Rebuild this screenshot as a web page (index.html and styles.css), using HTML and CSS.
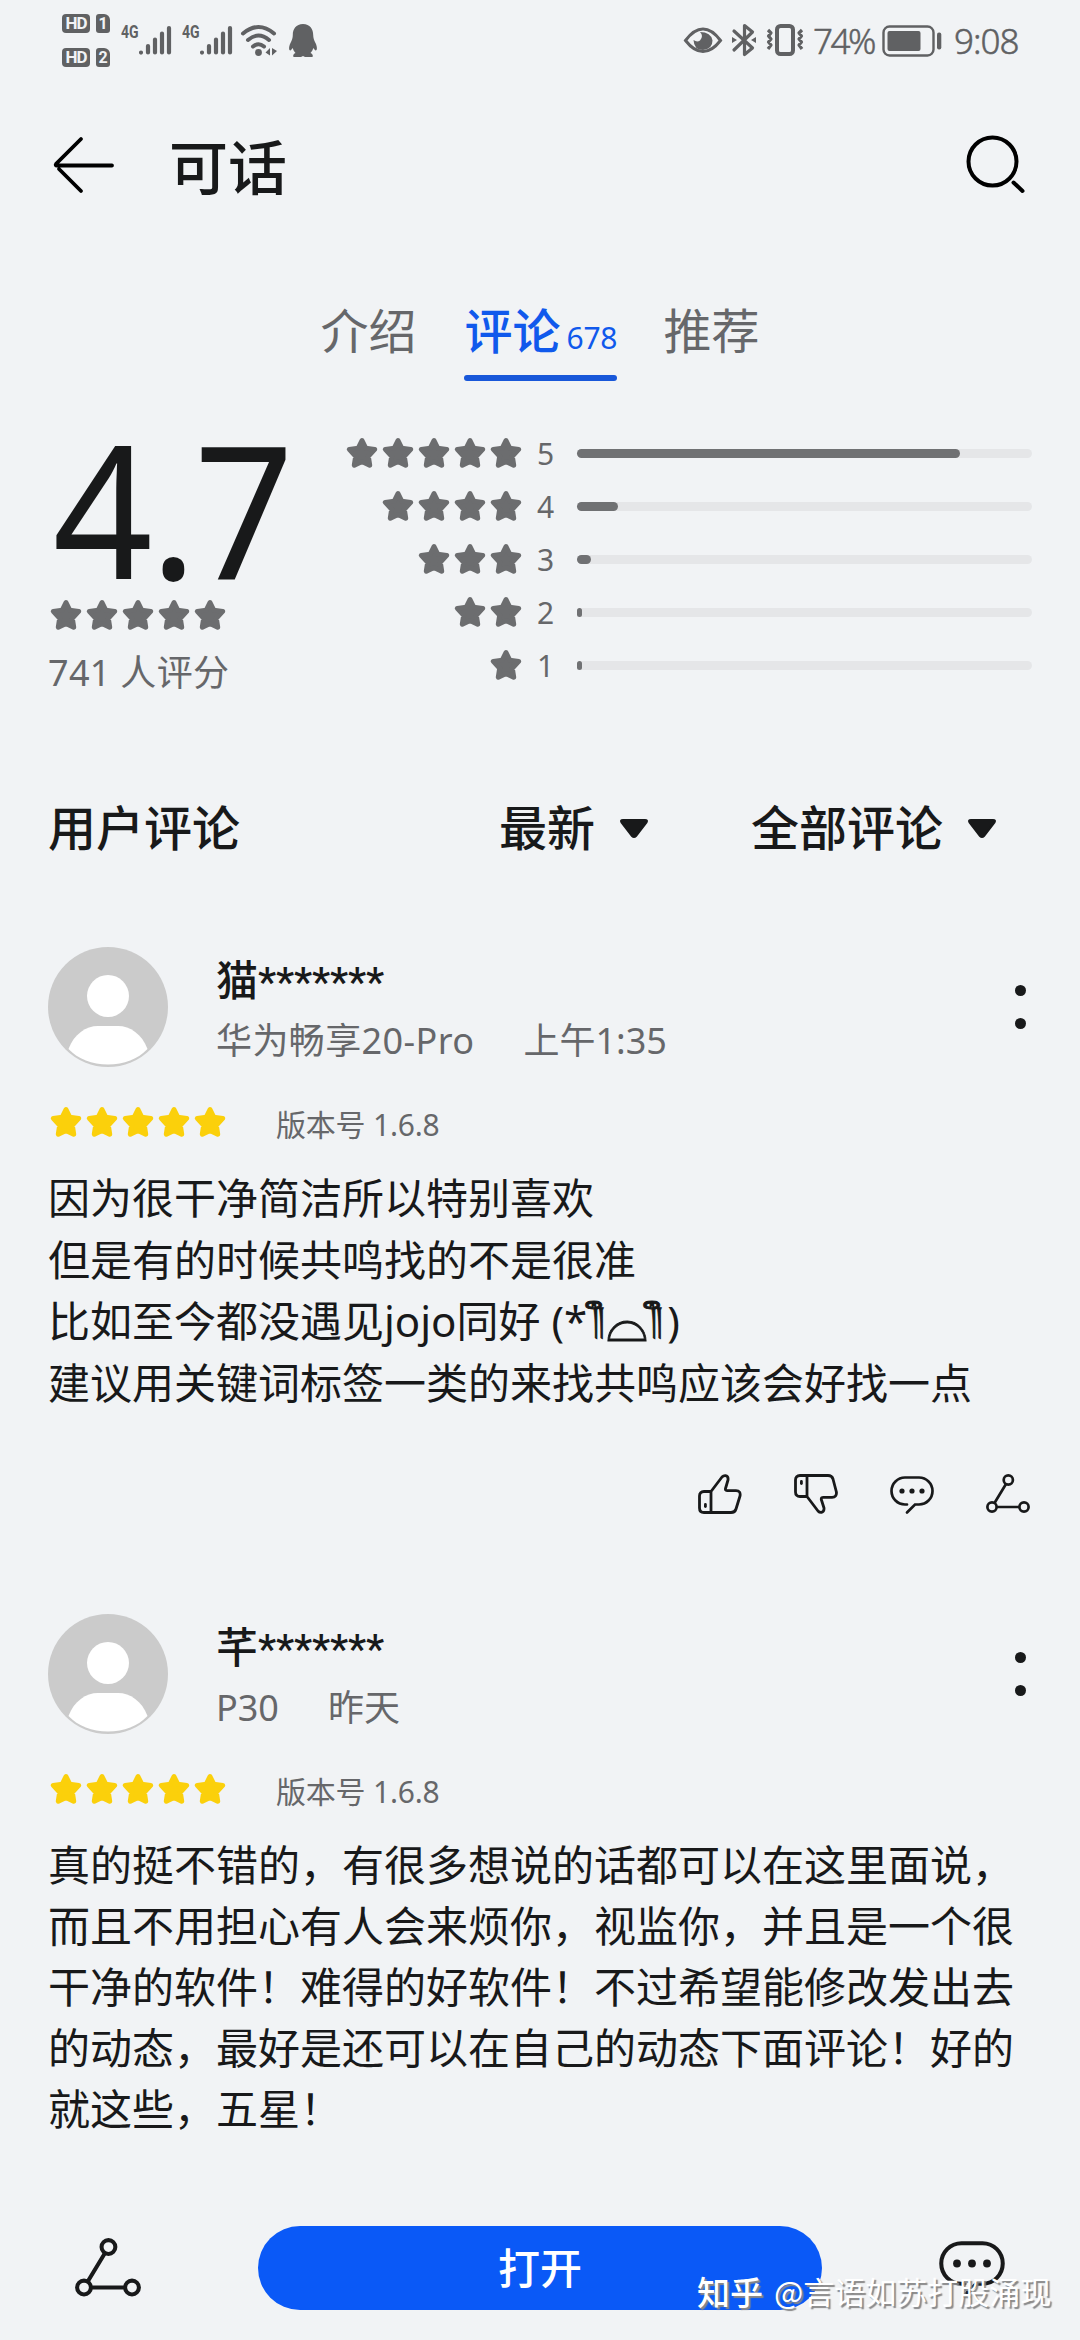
FILE: index.html
```html
<!DOCTYPE html>
<html lang="zh-CN">
<head>
<meta charset="utf-8">
<title>可话</title>
<link rel="stylesheet" href="styles.css">
</head>
<body>
<svg class="defs" width="0" height="0">
  <symbol id="star" viewBox="0 0 36 36"><path d="M18 5.500 L21.700 13.100 L30.700 14.400 L24.300 21.200 L25.700 30.200 L18 26.400 L10.300 30.200 L11.700 21.200 L5.300 14.400 L14.300 13.100 Z" fill="currentColor" stroke="currentColor" stroke-width="5" stroke-linejoin="round"/></symbol>
  <symbol id="s2" viewBox="0 0 72 36"><use href="#star" width="36" height="36"/><use href="#star" x="36" width="36" height="36"/></symbol>
  <symbol id="s3" viewBox="0 0 108 36"><use href="#s2" width="72" height="36"/><use href="#star" x="72" width="36" height="36"/></symbol>
  <symbol id="s4" viewBox="0 0 144 36"><use href="#s2" width="72" height="36"/><use href="#s2" x="72" width="72" height="36"/></symbol>
  <symbol id="s5" viewBox="0 0 180 36"><use href="#s4" width="144" height="36"/><use href="#star" x="144" width="36" height="36"/></symbol>
  <symbol id="avatar" viewBox="0 0 120 120"><circle cx="60" cy="60" r="60" fill="#cbcbcb"/><ellipse cx="60" cy="49" rx="21" ry="21" fill="#fff"/><path d="M20.500 102 C26 87 38 79 50 79 H70 C82 79 94 87 99.500 102 C90 112 76 117.500 60 117.500 S30 112 20.500 102Z" fill="#fff"/></symbol>
  <symbol id="share" viewBox="0 0 44 40"><g fill="none" stroke="#18191a" stroke-width="2.700"><circle cx="22.300" cy="6" r="4.600"/><circle cx="6" cy="33" r="4.600"/><circle cx="38" cy="33" r="4.600"/><path d="M20 10 L8.500 29 M10.600 33 H33.400"/></g></symbol>
  <symbol id="comment" viewBox="0 0 44 42"><g fill="none" stroke="#18191a" stroke-width="2.700" stroke-linecap="round"><path d="M17 30.500 H15 A13.500 13.500 0 0 1 15 3.500 H29 A13.500 13.500 0 0 1 29 30.500 H25 L17 38.500"/></g><g fill="#18191a"><circle cx="12" cy="17" r="2.600"/><circle cx="22" cy="17" r="2.600"/><circle cx="32" cy="17" r="2.600"/></g></symbol>
  <symbol id="up" viewBox="0 0 44 40"><g fill="none" stroke="#18191a" stroke-width="2.800" stroke-linejoin="round" stroke-linecap="round"><path d="M12 17.500 H6 Q1.500 17.500 1.500 22 V34 Q1.500 38.500 6 38.500 H33 Q37 38.500 38 35 L42 22 Q43 16.700 38 16.700 H29.500 Q27 16.700 27.500 14.500 L30 6 Q30.500 2 27.500 1.600 Q25.500 1.400 24 3 L13 17.500 V38"/><path d="M7.400 30.500 V32.500"/></g></symbol>
  <symbol id="down" viewBox="0 0 44 40"><g fill="none" stroke="#18191a" stroke-width="2.800" stroke-linejoin="round" stroke-linecap="round"><path d="M13 1.500 H34 Q38 1.500 39 5 L42.400 18 Q43 23 38 23.300 H29.500 Q27 23.300 27.300 25.500 L30 34 Q30.300 37.700 27.500 38.400 Q25.500 38.600 24 37 L13 22.500 M12 22.500 H6 Q1.500 22.500 1.500 18 V6 Q1.500 1.500 6 1.500 H13 V22"/><path d="M7.400 7.500 V9.500"/></g></symbol>
  <symbol id="tri" viewBox="0 0 30 21"><path d="M4 2 H26 Q29 2 27.500 4.500 L17 18 Q15 20 13 18 L2.500 4.500 Q1 2 4 2Z" fill="#18191a" stroke="#18191a" stroke-width="2"/></symbol>
  <symbol id="signal" viewBox="0 0 34 32"><g stroke="#606163" stroke-width="4.200" stroke-linecap="round"><path d="M3 28.500V28.600M10 22V28.500M17 15.500V28.500M24 9.500V28.500M31 4V28.500"/></g></symbol>
</svg>

<header class="status">
  <div class="hds">
    <div class="hd"><b>HD</b><i>1</i></div>
    <div class="hd"><b>HD</b><i>2</i></div>
  </div>
  <div class="cell"><span>4G</span><svg width="34" height="32"><use href="#signal"/></svg></div>
  <div class="cell"><span>4G</span><svg width="34" height="32"><use href="#signal"/></svg></div>
  <svg class="wifi" width="38" height="34" viewBox="0 0 38 34"><g fill="none" stroke="#606163" stroke-width="4" stroke-linecap="round"><path d="M3 9.500 Q18.500 -3.500 34 9.500"/><path d="M8 16 Q18.500 7 29 16"/><path d="M13 22.500 Q18.500 18 24 22.500"/></g><circle cx="18.500" cy="28.500" r="3.400" fill="#606163"/><path d="M30 24 V31.500 L25.500 28.500Z M32 24 V31.500 L37 27Z" fill="#606163"/></svg>
  <svg class="qq" width="28" height="34" viewBox="0 0 28 34"><path d="M14 1 C7 1 3.800 6 3.800 12 C3.800 15 3 17 1.500 20 C0 23 -.5 27 1 27.500 C2 27.600 3 26 3.800 25 C4.300 27 5 28.500 6.500 30 C4 31 3.500 34 5 34 H12 L14 33 L16 34 H23 C24.500 34 24 31 21.500 30 C23 28.500 23.700 27 24.200 25 C25 26 26 27.600 27 27.500 C28.500 27 28 23 26.500 20 C25 17 24.200 15 24.200 12 C24.200 6 21 1 14 1Z" fill="#606163"/></svg>
  <div class="spacer"></div>
  <svg class="eye" width="40" height="28" viewBox="0 0 40 28"><path d="M2.500 14.500 Q11 3 20 3 T37.500 14.500 Q29 25.500 20 25.500 T2.500 14.500Z" fill="none" stroke="#606163" stroke-width="3"/><path d="M17 6 Q21 10 17 14.500 Q14 16.500 10.500 14 Q11 24 20 24 Q29.500 23 29.500 14.500 Q28 6 17 6Z" fill="#606163"/></svg>
  <svg class="bt" width="26" height="34" viewBox="0 0 26 34"><path d="M3 8 L21.500 25 L13.500 31.500 V2.500 L21.500 9 L3 27" fill="none" stroke="#606163" stroke-width="3.200" stroke-linejoin="round" stroke-linecap="round"/><path d="M1 14 L6 17 L1 20Z M25 14 L20 17 L25 20Z" fill="#606163"/></svg>
  <svg class="vib" width="38" height="32" viewBox="0 0 38 32"><rect x="11" y="2" width="16" height="28" rx="3.500" fill="none" stroke="#606163" stroke-width="4"/><path d="M2 6 L5 9 L2.500 12 L5 15 L2.500 18 L5 21 L2 25 M36 6 L33 9 L35.500 12 L33 15 L35.500 18 L33 21 L36 25" fill="none" stroke="#606163" stroke-width="3.200" stroke-linejoin="round"/></svg>
  <span class="pct">74%</span>
  <svg class="bat" width="60" height="32" viewBox="0 0 60 32"><rect x="1.500" y="1.500" width="50" height="29" rx="6" fill="none" stroke="#606163" stroke-width="2.400"/><rect x="5.500" y="6" width="33" height="20" rx="2" fill="#606163"/><rect x="55" y="7.500" width="4.300" height="17" rx="2" fill="#606163"/></svg>
  <span class="time">9:08</span>
</header>

<nav class="head">
  <svg width="62" height="58" viewBox="0 0 62 58"><path d="M28 3 L3 28 Q2 29.500 4 29.500 H59 M6 33 L28 55" fill="none" stroke="#000" stroke-width="3.800" stroke-linecap="round"/></svg>
  <h1>可话</h1>
  <svg width="60" height="60" viewBox="0 0 60 60"><circle cx="26.500" cy="26.500" r="24" fill="none" stroke="#000" stroke-width="4"/><path d="M47.500 47.500 L56.500 56" stroke="#000" stroke-width="4" stroke-linecap="round"/></svg>
</nav>

<div class="tabs">
  <div class="tab">介绍</div>
  <div class="tab active"><div class="label">评论<small>678</small></div><div class="line"></div></div>
  <div class="tab">推荐</div>
</div>

<section class="rating">
  <div class="score">
    <div class="big">4.7</div>
    <svg width="180" height="36"><use href="#s5"/></svg>
    <p>741 人评分</p>
  </div>
  <div class="bars">
    <div class="row"><svg width="180" height="36"><use href="#s5"/></svg><span>5</span><div class="track"><div class="fill" style="width:383px"></div></div></div>
    <div class="row"><svg width="144" height="36"><use href="#s4"/></svg><span>4</span><div class="track"><div class="fill" style="width:41px"></div></div></div>
    <div class="row"><svg width="108" height="36"><use href="#s3"/></svg><span>3</span><div class="track"><div class="fill" style="width:14px"></div></div></div>
    <div class="row"><svg width="72" height="36"><use href="#s2"/></svg><span>2</span><div class="track"><div class="fill" style="width:5px"></div></div></div>
    <div class="row"><svg width="36" height="36"><use href="#star"/></svg><span>1</span><div class="track"><div class="fill" style="width:5px"></div></div></div>
  </div>
</section>

<div class="filters">
  <h2>用户评论</h2>
  <div class="sel">最新<svg width="30" height="21"><use href="#tri"/></svg></div>
  <div class="sel">全部评论<svg width="30" height="21"><use href="#tri"/></svg></div>
</div>

<article class="review">
  <div class="user">
    <svg width="120" height="120"><use href="#avatar"/></svg>
    <div class="who"><h3>猫<span>*******</span></h3><p><span class="device">华为畅享20-Pro</span><span>上午1:35</span></p></div>
    <div class="more"><i></i><i></i></div>
  </div>
  <div class="meta"><svg width="180" height="36"><use href="#s5"/></svg><span>版本号 1.6.8</span></div>
  <div class="text first">因为很干净简洁所以特别喜欢<br>但是有的时候共鸣找的不是很准<br>比如至今都没遇见jojo同好 (*<span class="cry">༎ຶ</span><span class="arc">⌓</span><span class="cry">༎ຶ</span>)<br>建议用关键词标签一类的来找共鸣应该会好找一点</div>
  <div class="acts">
    <svg width="44" height="40"><use href="#up"/></svg>
    <svg width="44" height="40"><use href="#down"/></svg>
    <svg width="44" height="42"><use href="#comment"/></svg>
    <svg width="44" height="40"><use href="#share"/></svg>
  </div>
</article>

<article class="review second">
  <div class="user">
    <svg width="120" height="120"><use href="#avatar"/></svg>
    <div class="who"><h3>芊<span>*******</span></h3><p><span>P30</span><span>昨天</span></p></div>
    <div class="more"><i></i><i></i></div>
  </div>
  <div class="meta"><svg width="180" height="36"><use href="#s5"/></svg><span>版本号 1.6.8</span></div>
  <div class="text">真的挺不错的，有很多想说的话都可以在这里面说，<br>而且不用担心有人会来烦你，视监你，并且是一个很<br>干净的软件！难得的好软件！不过希望能修改发出去<br>的动态，最好是还可以在自己的动态下面评论！好的<br>就这些，五星！</div>
</article>

<footer class="bottom">
  <svg width="66" height="60"><use href="#share"/></svg>
  <div class="open">打开</div>
  <svg width="66" height="63"><use href="#comment"/></svg>
  <div class="mark"><b>知乎</b><span>@言语如苏打股涌现</span></div>
</footer>
</body>
</html>
```

FILE: styles.css
```css
* { box-sizing: border-box; margin: 0; padding: 0; }
body {
  width: 1080px; height: 2340px; overflow: hidden;
  display: flex; flex-direction: column;
  background: #f1f3f5; color: #18191a;
  font-family: "Noto Sans", "Noto Sans CJK SC", sans-serif;
}
body > * { flex: none; }
svg { display: block; flex: none; }
.defs { height: 0; width: 0; }
h1, h2, h3 { font-weight: 500; }

.status { height: 80px; display: flex; align-items: flex-start; padding: 0 60px 0 62px; color: #606163; }
.hds { display: flex; flex-direction: column; gap: 15px; padding-top: 14px; width: 59px; }
.hd { display: flex; gap: 6px; height: 19px; }
.hd b, .hd i {
  background: #606163; color: #f1f3f5; border-radius: 4px; text-align: center;
  font: bold 17px/19px "Roboto", sans-serif;
}
.hd b { width: 28px; letter-spacing: -1px; }
.hd i { width: 14px; border-radius: 3px 6px 3px 3px; font-size: 16px; }
.cell { display: flex; width: 61px; padding-top: 25px; }
.cell span { width: 17px; font: bold 18px/14px "Roboto", sans-serif; transform: scaleX(.78); transform-origin: left; }
.cell svg { margin-top: -1px; }
.wifi { margin: 24px 0 0 -3px; }
.qq { margin: 23px 0 0 11px; }
.spacer { flex: 1; }
.eye { margin-top: 26px; }
.bt { margin: 23px 0 0 8px; }
.vib { margin: 24px 0 0 9px; }
.pct, .time { font-size: 35px; line-height: 82px; font-weight: 300; white-space: nowrap; -webkit-text-stroke: .5px #606163; }
.pct { width: 62px; margin-left: 9px; letter-spacing: -2.500px; }
.bat { margin: 25px 0 0 7px; }
.time { width: 66px; margin-left: 12px; letter-spacing: -1px; }

.head { height: 170px; display: flex; align-items: center; padding: 0 54px 0 53px; }
.head h1 { font-size: 59px; line-height: 80px; margin: 4px auto 0 54px; }

.tabs { height: 131px; padding-top: 50px; display: flex; justify-content: center; gap: 47px; font-size: 48px; line-height: 62px; color: #66676a; }
.active { width: 153px; color: #1059ec; font-weight: 500; white-space: nowrap; }
.label { padding-left: 1px; height: 62px; }
.line { height: 6px; margin-top: 13px; border-radius: 3px; background: #1857d9; }
.active small { font-size: 30px; font-weight: 400; letter-spacing: -.3px; margin-left: 6px; }

.rating { display: flex; padding: 45px 48px 0; height: 316px; color: #66676a; }
.score { width: 295px; }
.big { font-size: 185px; line-height: 162px; letter-spacing: -3px; color: #18191a; transform: scaleX(.945); transform-origin: left; padding-left: 5px; white-space: nowrap; }
.score svg { margin-top: 9px; color: #6c6d6f; }
.score p { font-size: 36px; line-height: 48px; margin-top: 16px; letter-spacing: .3px; }
.bars { flex: 1; }
.row { height: 53px; display: flex; align-items: center; justify-content: flex-end; }
.row svg { color: #6c6d6f; }
.row span { width: 53px; padding: 3px 0 0 13px; font-size: 30px; line-height: 50px; }
.track { width: 455px; height: 9px; margin-top: 2px; border-radius: 5px; background: #e5e6e8; }
.fill { height: 9px; border-radius: 5px; background: #707173; }

.filters { height: 100px; margin-top: 81px; padding-left: 48px; display: flex; align-items: center; font-size: 48px; line-height: 62px; font-weight: 500; }
.filters h2 { font-size: 48px; width: 451px; }
.sel { display: flex; align-items: center; }
.sel svg { margin-left: 24px; }
.sel + .sel { margin-left: 102px; }

.review { margin-top: 69px; padding: 0 48px; }
.second { margin-top: 98px; }
.user { display: flex; height: 120px; }
.who { flex: 1; margin: 3px 0 0 48px; }
.who h3 { font-size: 42px; line-height: 60px; }
.who h3 span { font-family: "Roboto", sans-serif; font-size: 41px; letter-spacing: -.2px; }
.who p { display: flex; gap: 49px; margin-top: -1px; font-size: 36px; line-height: 60px; color: #66676a; }
.device { letter-spacing: .4px; }
.more { width: 24px; display: flex; flex-direction: column; justify-content: center; align-items: center; gap: 22px; }
.more i { width: 11px; height: 11px; border-radius: 50%; background: #18191a; }
.meta { display: flex; align-items: center; height: 36px; margin-top: 37px; color: #fbd00b; }
.meta span { margin: 1px 0 0 48px; font-size: 30px; letter-spacing: -.2px; color: #66676a; }
.text { margin-top: 27px; font-size: 42px; line-height: 61px; white-space: nowrap; }
.first { line-height: 61.500px; }
.cry, .arc { display: inline-block; height: 40px; line-height: 40px; vertical-align: top; text-align: center; }
.cry { width: 22px; font-size: 27px; transform: translateY(6px) scaleX(1.15); -webkit-text-stroke: .8px #18191a; }
.arc { width: 36px; font-family: "DejaVu Sans", sans-serif; font-size: 38px; line-height: 64px; transform: translateY(-4px) scale(1.4); -webkit-text-stroke: .6px #18191a; }
.acts { display: flex; justify-content: flex-end; gap: 52px; margin: 61px 2px 0 0; height: 42px; }

.bottom { position: relative; display: flex; align-items: flex-start; margin-top: 87px; padding-left: 75px; }
.bottom > svg { margin-top: 12px; }
.open { width: 564px; height: 84px; margin: 0 117px; border-radius: 42px; background: #0a59f7; color: #fff; text-align: center; font-size: 42px; line-height: 84px; font-weight: 500; }
.mark { position: absolute; left: 697px; top: 42px; display: flex; gap: 11px; font-family: "Noto Sans CJK SC", sans-serif; font-size: 31px; line-height: 46px; color: #fff; text-shadow: 2px 2px 1px #888; white-space: nowrap; }
.mark b { font-weight: 500; font-size: 33px; }
```
